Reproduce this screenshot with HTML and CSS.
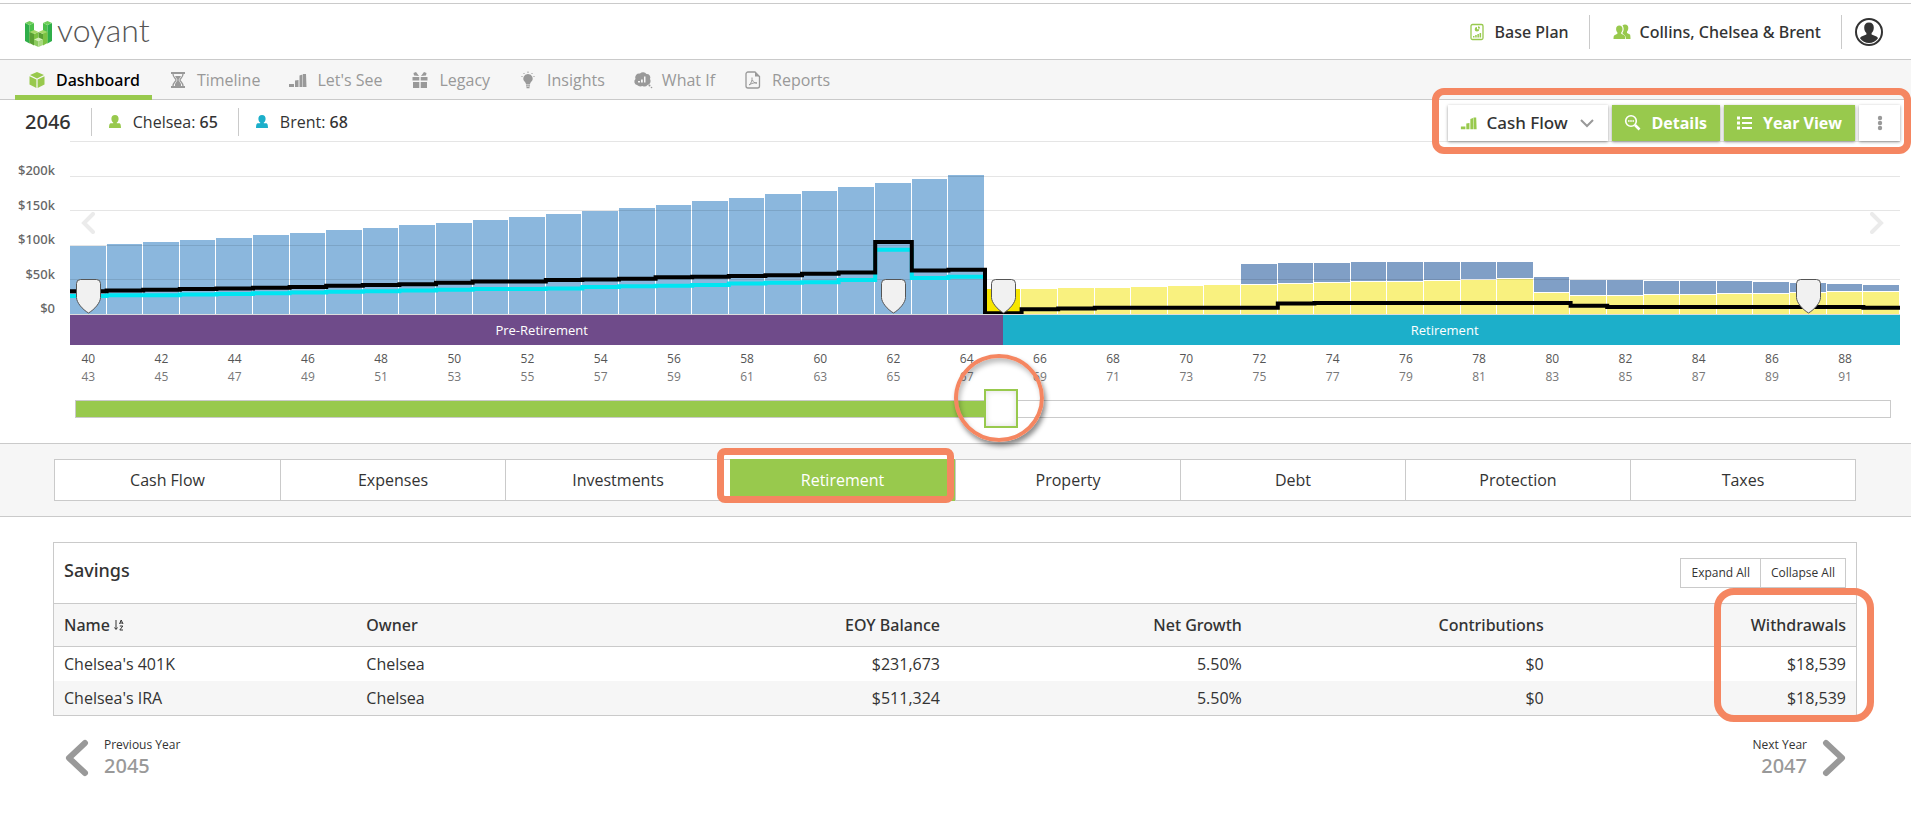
FILE: index.html
```
<!DOCTYPE html>
<html lang="en">

<head>
  <meta charset="UTF-8">
  <meta name="viewport" content="width=device-width, initial-scale=1.0">
  <link rel="icon" href="data:,">
  <title>Voyant - Dashboard</title>
  <link rel="stylesheet" href="styles.css">
</head>

<body>
  <header class="topbar">
    <a href="#" class="logo">
      <svg viewBox="0 0 27 26" width="27" height="26" aria-hidden="true">
        <path fill="#2fae49" d="M0 2l4.500 2v18.500L0 20z" />
        <path fill="#4cc04a" d="M4.500 4 9 2v18l-4.500 2.500z" />
        <path fill="#6fcf5a" d="M0 2 4.500 0 9 2 4.500 4z" />
        <path fill="#4cc04a" d="M18 2l4.500 2v18.500L18 20z" />
        <path fill="#2fae49" d="M22.500 4 27 2v18l-4.500 2.500z" />
        <path fill="#6fcf5a" d="M18 2 22.500 0 27 2l-4.500 2z" />
        <path fill="#5b9f34" d="M4.500 11 9 13v11.500l-4.500-2.500z" />
        <path fill="#7cc242" d="M9 13l4.500-2v9L9 24z" />
        <path fill="#a5d867" d="M4.500 11 9 9l4.500 2L9 13z" />
        <path fill="#5b9f34" d="M13.500 11l4.500 2v11l-4.500-3z" />
        <path fill="#7cc242" d="M18 13l4.500-2v11L18 24.500z" />
        <path fill="#a5d867" d="M13.500 11 18 9l4.500 2-4.500 2z" />
        <path fill="#8ccb5e" d="M9 18.500l4.500 2V26L9 24z" />
        <path fill="#a9da80" d="M13.500 20.500l4.500-2V24l-4.500 2z" />
        <path fill="#d3efb8" d="M9 18.500l4.500-2 4.500 2-4.500 2z" />
      </svg>
      <span>voyant</span>
    </a>
    <div class="account">
      <a href="#">
        <svg class="green" viewBox="0 0 20 20" width="20" height="20"><use href="#i-plan" /></svg>
        Base Plan
      </a>
      <a href="#">
        <svg class="green" viewBox="0 0 20 20" width="20" height="20"><use href="#i-people" /></svg>
        Collins, Chelsea &amp; Brent
      </a>
      <button class="user" aria-label="User menu">
        <svg viewBox="0 0 28 28" width="28" height="28"><use href="#i-user" /></svg>
      </button>
    </div>
  </header>

  <nav class="menu">
    <a href="#" class="active"><svg viewBox="0 0 20 20" width="20" height="20"><use href="#i-cube" /></svg>Dashboard</a>
    <a href="#"><svg viewBox="0 0 20 20" width="20" height="20"><use href="#i-hourglass" /></svg>Timeline</a>
    <a href="#"><svg viewBox="0 0 20 20" width="20" height="20"><use href="#i-bars" /></svg>Let's See</a>
    <a href="#"><svg viewBox="0 0 20 20" width="20" height="20"><use href="#i-gift" /></svg>Legacy</a>
    <a href="#"><svg viewBox="0 0 20 20" width="20" height="20"><use href="#i-bulb" /></svg>Insights</a>
    <a href="#"><svg viewBox="0 0 20 20" width="20" height="20"><use href="#i-cloud" /></svg>What If</a>
    <a href="#"><svg viewBox="0 0 20 20" width="20" height="20"><use href="#i-report" /></svg>Reports</a>
  </nav>

  <main>
    <div class="yearbar">
      <h1>2046</h1>
      <div class="person"><svg class="green" viewBox="0 0 20 20" width="20" height="20"><use href="#i-person" /></svg><span>Chelsea: <b>65</b></span></div>
      <div class="person"><svg class="teal" viewBox="0 0 20 20" width="20" height="20"><use href="#i-person" /></svg><span>Brent: <b>68</b></span></div>
      <div class="toolbar">
        <div class="picker">
          <svg class="green" viewBox="0 0 20 20" width="18" height="18"><use href="#i-bars" /></svg>
          <select aria-label="Chart">
            <option>Cash Flow</option>
          </select>
          <svg class="arrow" viewBox="0 0 14 9" width="14" height="9"><path d="M1 1l6 6 6-6" /></svg>
        </div>
        <button class="primary"><svg viewBox="0 0 20 20" width="20" height="20"><use href="#i-zoom" /></svg>Details</button>
        <button class="primary"><svg viewBox="0 0 20 20" width="20" height="20"><use href="#i-list" /></svg>Year View</button>
        <button class="more" aria-label="More"><svg viewBox="0 0 6 16" width="6" height="16"><use href="#i-dots" /></svg></button>
        <span class="mark mark-toolbar"></span>
      </div>
    </div>

    <section class="chart">
      <div class="scale">
        <span>$200k</span>
        <span>$150k</span>
        <span>$100k</span>
        <span>$50k</span>
        <span>$0</span>
      </div>
      <div class="plot">
        <div class="canvas">
          <div class="bars" id="bars"></div>
          <div class="grid"><i></i><i></i><i></i><i></i><i></i></div>
          <svg class="lines" viewBox="0 0 50 250" preserveAspectRatio="none">
            <path id="expenses" class="line-expenses" />
            <path id="needs" class="line-needs" />
          </svg>
          <div class="events" id="events"></div>
          <button class="scroll scroll-left" aria-label="Earlier"><svg viewBox="0 0 14 22" width="14" height="22"><path d="M12 2 3 11l9 9" /></svg></button>
          <button class="scroll scroll-right" aria-label="Later"><svg viewBox="0 0 14 22" width="14" height="22"><path d="M2 2l9 9-9 9" /></svg></button>
        </div>
        <div class="stages">
          <div class="pre">Pre-Retirement</div>
          <div class="post">Retirement</div>
        </div>
        <div class="ages" id="ages"></div>
        <div class="slider">
          <input type="range" id="year" min="0" max="49" value="25" aria-label="Year">
          <span class="mark mark-slider"></span>
        </div>
      </div>
    </section>

    <div class="tabs-wrap">
      <div class="tabs">
        <button>Cash Flow</button>
        <button>Expenses</button>
        <button>Investments</button>
        <button class="selected">Retirement<span class="mark mark-tab"></span></button>
        <button>Property</button>
        <button>Debt</button>
        <button>Protection</button>
        <button>Taxes</button>
      </div>
    </div>

    <section class="card">
      <div class="card-head">
        <h2>Savings</h2>
        <div class="toggle">
          <button>Expand All</button>
          <button>Collapse All</button>
        </div>
      </div>
      <table>
        <thead>
          <tr>
            <th>Name <svg viewBox="0 0 10 12" width="10" height="12"><use href="#i-sort" /></svg></th>
            <th>Owner</th>
            <th class="num">EOY Balance</th>
            <th class="num">Net Growth</th>
            <th class="num">Contributions</th>
            <th class="num">Withdrawals</th>
          </tr>
        </thead>
        <tbody>
          <tr>
            <td>Chelsea's 401K</td>
            <td>Chelsea</td>
            <td class="num">$231,673</td>
            <td class="num">5.50%</td>
            <td class="num">$0</td>
            <td class="num">$18,539</td>
          </tr>
          <tr>
            <td>Chelsea's IRA</td>
            <td>Chelsea</td>
            <td class="num">$511,324</td>
            <td class="num">5.50%</td>
            <td class="num">$0</td>
            <td class="num">$18,539</td>
          </tr>
        </tbody>
      </table>
      <span class="mark mark-column"></span>
    </section>

    <div class="pager">
      <a href="#">
        <svg viewBox="0 0 24 38" width="24" height="38"><path d="M20 4 4 19l16 15" /></svg>
        <span><small>Previous Year</small><strong>2045</strong></span>
      </a>
      <a href="#" class="next">
        <span><small>Next Year</small><strong>2047</strong></span>
        <svg viewBox="0 0 24 38" width="24" height="38"><path d="M4 4l16 15L4 34" /></svg>
      </a>
    </div>
  </main>

  <svg style="display: none;">
    <defs>
      <symbol id="i-cube" viewBox="0 0 20 20">
        <path d="M10 2l7 3-7 3.400L3 5z" />
        <path d="M2.500 6.200 9.400 9.500V18l-6.900-3.400z" />
        <path d="M17.500 6.200 10.600 9.500V18l6.900-3.400z" />
      </symbol>
      <symbol id="i-hourglass" viewBox="0 0 20 20">
        <path d="M3 2h14v2H3zM3 16h14v2H3z" />
        <path d="M5 4c0 3.500 3 4.500 3 6s-3 2.500-3 6M15 4c0 3.500-3 4.500-3 6s3 2.500 3 6" fill="none" stroke="currentColor" stroke-width="1.300" />
        <path d="M7 6h6l-2.500 4 2.500 4v2H7v-2l2.500-4z" />
      </symbol>
      <symbol id="i-bars" viewBox="0 0 20 20">
        <path d="M1 14h5v3H1zM7 10.500l3.500-.5v7H7zM11.500 5.500l3-1V17h-3zM15 4h3l.5 13H15z" />
      </symbol>
      <symbol id="i-gift" viewBox="0 0 20 20">
        <path d="M2.500 7h6.800v3.500H2.500zM10.700 7h6.800v3.500h-6.800zM3 12h6.300v6H3zM10.700 12H17v6h-6.300z" />
        <path d="M9 6 4 5.500 3.500 3 6 2zM11 6l5-.5.500-2.500L14 2z" />
      </symbol>
      <symbol id="i-bulb" viewBox="0 0 20 20">
        <path d="M10 4a4.500 4.500 0 0 1 3.200 7.800c-.8.800-1.200 1.700-1.200 2.700H8c0-1-.4-1.900-1.200-2.700A4.500 4.500 0 0 1 10 4zM8 15.200h4v1.200H8zM8.500 17h3v1.300h-3z" />
        <path d="M10 1.500v1.500M5.500 3l1 1M14.500 3l-1 1M3.500 6.500h1M15.500 6.500h1" fill="none" stroke="currentColor" />
      </symbol>
      <symbol id="i-cloud" viewBox="0 0 20 20">
        <path d="M4 15a3.500 3.500 0 0 1-1.500-6A4 4 0 0 1 7 3.500a4.500 4.500 0 0 1 6.500.5A3.500 3.500 0 0 1 17 9a4 4 0 0 1-2.500 6 4 4 0 0 1-5 1 5 5 0 0 1-5.500-1z" />
        <path fill="#f6f6f6" d="M5 11h2v1.500H5zM8 9.500h1.800v3H8zM11 6.500h1.500v6H11z" />
        <circle cx="16.500" cy="15.500" r="1" />
        <circle cx="18.500" cy="17.500" r=".8" />
      </symbol>
      <symbol id="i-report" viewBox="0 0 20 20">
        <path d="M5 2h7l4.500 4.500V16a2 2 0 0 1-2 2H5a2 2 0 0 1-2-2V4a2 2 0 0 1 2-2z" fill="none" stroke="currentColor" stroke-width="1.300" />
        <path d="M12 2v4.500h4.500z" />
        <path d="M6 15c2-1.500 3.500-4.500 3-7.500M9.500 10c.5 2 2 3 4.500 3-3-.5-5 .2-8 2" fill="none" stroke="currentColor" />
      </symbol>
      <symbol id="i-plan" viewBox="0 0 20 20">
        <rect x="4" y="2.500" width="12" height="15" rx="1.500" fill="none" stroke="currentColor" stroke-width="1.300" />
        <path d="M10 5a2.300 2.300 0 1 0 2.300 2.300H10z" />
        <path d="M11 4.200v2.200h2.200A2.200 2.200 0 0 0 11 4.200zM6 14h1.500v1.500H6zM8.200 13h1.500v2.500H8.200zM10.400 12h1.500v3.500h-1.500zM12.600 11h1.500v4.500h-1.500z" />
      </symbol>
      <symbol id="i-people" viewBox="0 0 20 20">
        <path d="M13 2.500c2.200 0 3.300 1.500 3.300 3.500 0 1.500-.5 2.800-1.300 3.600v1.400l3 1.500c.4 1 .5 2.500.5 4.500H14c-.2-2.500-.8-3.800-2.500-4.600L10.300 11c1-1.200 1.500-2.700 1.300-4.700-.1-1.300-.5-2.300-1.100-2.900.7-.6 1.500-.9 2.500-.9z" />
        <path d="M7.300 3.500c2.100 0 3.200 1.400 3.200 3.400 0 1.500-.5 2.700-1.300 3.500v1.300l3 1.500c.8.500 1 1.800 1 3.800H1.500c0-2 .2-3.300 1-3.800l2.900-1.500v-1.300c-.8-.8-1.300-2-1.300-3.500 0-2 1.100-3.400 3.200-3.400z" />
      </symbol>
      <symbol id="i-person" viewBox="0 0 20 20">
        <path d="M10 3c2.400 0 3.600 1.600 3.600 3.700 0 1.700-.7 3-1.800 3.900v.7h2.700c1 .3 1.400 1.700 1.500 4.700H4c.1-3 .5-4.400 1.500-4.700h2.700v-.7c-1.100-.9-1.800-2.200-1.800-3.900C6.400 4.600 7.600 3 10 3z" />
      </symbol>
      <symbol id="i-user" viewBox="0 0 28 28">
        <circle cx="14" cy="14" r="13" fill="none" stroke="currentColor" stroke-width="2" />
        <path d="M14 4.500c3.300 0 4.800 2 4.800 5 0 2.500-.8 4.300-2.200 5.500v1.500l4.900 2c.8.400 1.200 1 1.500 1.700a11 11 0 0 1-18 0c.3-.7.700-1.300 1.500-1.700l4.900-2V15c-1.400-1.200-2.200-3-2.200-5.500 0-3 1.500-5 4.800-5z" />
      </symbol>
      <symbol id="i-zoom" viewBox="0 0 20 20">
        <circle cx="8" cy="8" r="5.300" fill="none" stroke="currentColor" stroke-width="1.600" />
        <path d="M12 12l4.500 4.500" stroke="currentColor" stroke-width="2.600" />
        <path d="M5 7.200h1.600v1.600H5zM7.200 7.200h1.600v1.600H7.200zM9.400 7.200H11v1.600H9.400z" />
      </symbol>
      <symbol id="i-list" viewBox="0 0 20 20">
        <path d="M2 3.500h3v3H2zM7 4h10v2H7zM2 8.500h3v3H2zM7 9h10v2H7zM2 13.500h3v3H2zM7 14h10v2H7z" />
      </symbol>
      <symbol id="i-dots" viewBox="0 0 6 16">
        <circle cx="3" cy="3" r="2.200" /><circle cx="3" cy="8" r="2.200" /><circle cx="3" cy="13" r="2.200" />
      </symbol>
      <symbol id="i-sort" viewBox="0 0 10 12">
        <path d="M2 1v9M.5 8.500 2 10.500l1.500-2M5.500 5 7.200 1 9 5M6 4h2.500M5.800 7h3L5.800 11h3.200" fill="none" stroke="currentColor" />
      </symbol>
    </defs>
  </svg>

  <script src="chart.js"></script>
</body>

</html>
```

FILE: styles.css
```
:root {
  --green: #98c94d;
  --border: #cacaca;
  --panel: #f6f6f6;
  --mark: #f58661;
}

* {
  box-sizing: border-box;
}

body {
  margin: 0;
  font: 16px/24px "Open Sans", "Noto Sans", sans-serif;
  background: #fff;
  color: #333;
}

button,
select {
  margin: 0;
  padding: 0;
  border: 0;
  background: none;
  font: inherit;
  color: inherit;
  cursor: pointer;
}

a {
  text-decoration: none;
  color: inherit;
}

svg {
  display: block;
  fill: currentColor;
}

h1,
h2 {
  margin: 0;
}

/* Open Sans has no medium weight installed */
h1,
h2,
th,
.account,
.menu .active,
.person b,
.picker select,
.scale,
.pager strong {
  font-family: "Noto Sans", "Open Sans", sans-serif;
  font-weight: 500;
}

.green {
  color: var(--green);
}

.teal {
  color: #1cafca;
}

/* Header */

.topbar {
  display: flex;
  align-items: center;
  justify-content: space-between;
  block-size: 57px;
  margin-block-start: 3px;
  padding-inline: 25px 28px;
  border-block: 1px solid var(--border);
}

.logo {
  display: flex;
  align-items: center;
  gap: 5px;
  padding-block-start: 5px;
  font: 300 32px/40px Lato, sans-serif;
  color: #555;
}

.logo span {
  margin-block-end: 9px;
}

.account {
  display: flex;
  align-items: center;
}

.account a {
  display: flex;
  align-items: center;
  gap: 8px;
  block-size: 34px;
  padding-inline: 22px 20px;
  border-inline-end: 1px solid var(--border);
}

.user {
  margin-inline-start: 13px;
}

.menu {
  display: flex;
  gap: 4px;
  block-size: 40px;
  padding-inline: 15px;
  background: var(--panel);
  border-block-end: 1px solid var(--border);
  color: #999;
}

.menu a {
  display: flex;
  align-items: center;
  gap: 9px;
  block-size: 40px;
  padding-inline: 12px;
}

.menu .active {
  border-block: 5px solid transparent;
  border-block-end-color: var(--green);
  color: #000;
}

.menu .active svg {
  color: var(--green);
}

/* Year summary and chart toolbar */

.yearbar {
  display: flex;
  align-items: center;
  block-size: 41px;
  padding: 3px 11px 0 25px;
}

.yearbar h1 {
  font-size: 20px;
}

.person {
  display: flex;
  align-items: center;
  gap: 8px;
  block-size: 28px;
  margin-inline-start: 20px;
  padding-inline-start: 13px;
  border-inline-start: 1px solid var(--border);
}

.toolbar {
  position: relative;
  z-index: 2;
  display: flex;
  gap: 4px;
  margin-inline-start: auto;
  padding-block-start: 2px;
}

.toolbar > div,
.toolbar > button {
  display: flex;
  align-items: center;
  block-size: 36px;
  background: #fff;
  box-shadow: 0 1px 3px rgb(0 0 0 / 0.4);
}

.picker {
  gap: 8px;
  padding-inline: 12px 14px;
}

.picker select {
  appearance: none;
  font-size: 17px;
}

.arrow {
  margin-inline-start: 4px;
  fill: none;
  stroke: #999;
  stroke-width: 2;
}

.toolbar .primary {
  gap: 8px;
  padding-inline: 11px 13px;
  background: var(--green);
  font-weight: 700;
  color: #fff;
}

.toolbar .more {
  justify-content: center;
  inline-size: 41px;
  color: #999;
}

/* Callouts */

.mark {
  position: absolute;
  border: 7px solid var(--mark);
  border-radius: 12px;
  pointer-events: none;
}

.mark-toolbar {
  inset: -15px -11px -13px -16px;
}

.mark-slider {
  inset-block-start: -35px;
  inset-inline-start: calc(17px + (100% - 34px) * 25 / 49);
  inline-size: 90px;
  block-size: 88px;
  margin-inline-start: -47px;
  border-width: 4px;
  border-radius: 50%;
  box-shadow: 2px 4px 5px rgb(0 0 0 / 0.45), inset 2px 4px 5px rgb(0 0 0 / 0.25);
}

.mark-tab {
  inset: -11px 1px -2px -13px;
  border-radius: 8px;
  background: linear-gradient(#fff 4px, transparent 4px);
}

.mark-column {
  inset-block: 45px -7px;
  inset-inline-end: -18px;
  inline-size: 160px;
  border-radius: 20px;
}

/* Chart */

.chart {
  display: flex;
  padding-inline-end: 11px;
}

.scale {
  display: flex;
  flex-direction: column;
  justify-content: space-between;
  inline-size: 70px;
  block-size: 179px;
  padding: 17px 15px 0 0;
  text-align: end;
  font-size: 13px;
  color: #666;
}

.plot {
  flex: 1;
  min-inline-size: 0;
}

.canvas {
  position: relative;
  block-size: 174px;
  border-block-end: 1px solid #ddd;
}

.bars,
.events {
  display: flex;
  align-items: end;
  block-size: 100%;
}

.col {
  flex: 1;
  display: flex;
  flex-direction: column;
  justify-content: end;
  gap: 1px;
  block-size: 100%;
  border-inline-end: 1px solid #fff;
}

.income {
  background: #8bb7dd;
}

.social {
  background: #f9f17f;
}

.savings {
  background: #809fc6;
}

.current .social {
  background: #f7e600;
}

.grid {
  position: absolute;
  inset: 0;
  display: flex;
  flex-direction: column;
}

.grid i {
  flex: 1;
  border-block-start: 1px solid rgb(0 0 0 / 0.1);
}

.lines {
  position: absolute;
  inset: 0;
  inline-size: 100%;
  block-size: 100%;
  fill: none;
}

.lines path {
  stroke-width: 4px;
  vector-effect: non-scaling-stroke;
}

.line-expenses {
  stroke: #00e5f2;
}

.line-needs {
  stroke: #000;
}

.events {
  position: absolute;
  inset: 0;
}

.events span {
  flex: 1;
}

.events svg {
  margin-inline: auto;
  fill: #f1f1f1;
  stroke: #555;
}

.scroll {
  position: absolute;
  inset-block-start: 71px;
}

.scroll svg {
  fill: none;
  stroke: #ebebeb;
  stroke-width: 4;
  stroke-linecap: round;
}

.scroll-left {
  inset-inline-start: 11px;
}

.scroll-right {
  inset-inline-end: 16px;
}

.stages {
  display: grid;
  grid-template-columns: 51fr 49fr;
  line-height: 30px;
  text-align: center;
  font-size: 13px;
  color: #fff;
}

.pre {
  padding-inline-start: 10px;
  background: #6f4b8a;
}

.post {
  padding-inline-end: 14px;
  background: #1cafca;
}

.ages {
  display: grid;
  grid-template-columns: repeat(25, 1fr);
  padding-block: 5px 3px;
  font-size: 12px;
  line-height: 18px;
  color: #555;
}

.ages div {
  inline-size: 50%;
  text-align: center;
}

.ages span {
  display: block;
}

.ages span + span {
  color: #777;
}

.slider {
  position: relative;
  block-size: 54px;
  margin-inline: 5px 9px;
}

.slider input {
  appearance: none;
  display: block;
  inline-size: 100%;
  block-size: 39px;
  margin: 0;
  background: none;
}

.slider input::-webkit-slider-runnable-track {
  block-size: 18px;
  border: 1px solid var(--border);
  background: linear-gradient(var(--green), var(--green)) no-repeat 0 0 / var(--fill) 100%;
}

.slider input::-webkit-slider-thumb {
  appearance: none;
  inline-size: 34px;
  block-size: 39px;
  margin-block-start: -12px;
  border: 2px solid var(--green);
  background: #fff;
  box-shadow: inset 0 0 6px #ddd;
}

/* Tabs */

.tabs-wrap {
  padding: 15px 55px 15px 54px;
  border-block: 1px solid var(--border);
  background: var(--panel);
}

.tabs {
  display: grid;
  grid-template-columns: repeat(8, 1fr);
  border: 1px solid var(--border);
  background: #fff;
}

.tabs button {
  block-size: 40px;
}

.tabs button + button {
  border-inline-start: 1px solid var(--border);
}

.tabs .selected {
  position: relative;
  block-size: 42px;
  margin-block: -1px;
  border: 0;
  background: var(--green);
  color: #fff;
}

/* Savings table */

.card {
  position: relative;
  margin: 25px 54px 0 53px;
  border: 1px solid var(--border);
}

.card-head {
  display: flex;
  justify-content: space-between;
  block-size: 60px;
  padding: 15px 10px 0;
}

.card-head h2 {
  font-size: 18px;
}

.toggle {
  display: flex;
  block-size: 30px;
  border: 1px solid var(--border);
  font-size: 12px;
}

.toggle button {
  padding-inline: 10px;
}

.toggle button + button {
  border-inline-start: 1px solid var(--border);
}

table {
  inline-size: 100%;
  table-layout: fixed;
  border-collapse: collapse;
}

th,
td {
  padding: 5px 15px;
  text-align: start;
}

th {
  block-size: 43px;
  border-block: 1px solid var(--border);
  background: var(--panel);
}

th svg {
  display: inline-block;
}

th:first-child,
th:last-child {
  inline-size: 16.5%;
}

th:first-child,
td:first-child {
  padding-inline-start: 10px;
}

th:last-child,
td:last-child {
  padding-inline-end: 10px;
}

tbody tr:nth-child(even) {
  background: var(--panel);
}

.num {
  text-align: end;
}

/* Previous and next year */

.pager {
  display: flex;
  justify-content: space-between;
  margin: 19px 65px 0;
}

.pager a {
  display: flex;
  align-items: center;
  gap: 15px;
}

.pager svg {
  margin-block-start: 4px;
  fill: none;
  stroke: #999;
  stroke-width: 6;
  stroke-linecap: round;
  stroke-linejoin: round;
}

.pager small,
.pager strong {
  display: block;
}

.pager small {
  font-size: 12px;
  line-height: 20px;
}

.pager strong {
  font-size: 20px;
  line-height: 22px;
  color: #999;
}

.next {
  text-align: end;
}
```

FILE: chart.js
```
// All amounts are in thousands of dollars, one per year
const MAX = 250;
const START = [40, 43];
const current = 25;

const income = [98, 101, 104, 107, 110, 114, 117, 121, 124, 129, 131, 136, 140, 144, 149, 153, 157, 163, 168, 173, 178, 183, 189, 195, 201];
const social = [36, 36, 37, 37, 39, 40, 42, 42, 43, 45, 46, 46, 48, 49, 51, 30, 26, 26, 27, 27, 29, 29, 30, 32, 32];
const total = [71, 72, 72, 74, 74, 74, 74, 74, 52, 48, 48, 46, 46, 46, 45, 43, 42, 40];
const expenses = [26, 27, 27, 28, 29, 30, 31, 32, 33, 34, 35, 36, 36, 37, 39, 40, 41, 42, 44, 45, 46, 49, 93, 52, 54];
const needs = [33, 34, 35, 36, 37, 38, 39, 41, 42, 43, 45, 47, 47, 49, 50, 51, 53, 54, 55, 56, 58, 60, 104, 63, 64,
  1, 7, 8, 9, 9, 9, 9, 9, 15, 16, 16, 16, 16, 16, 16, 16, 12, 10, 10, 10, 10, 10, 10, 10, 9];
const events = [0, 22, 25, 47];

const bars = document.querySelector('#bars');
const eventRow = document.querySelector('#events');
const ages = document.querySelector('#ages');
const year = document.querySelector('#year');

function addBar(col, type, value) {
  const bar = document.createElement('div');
  bar.className = type;
  bar.style.height = `${value / MAX * 100}%`;
  col.append(bar);
}

// Each value is a flat step, one unit wide
function stepPath(values) {
  return values.map((v, i) => `${i ? 'L' : 'M'}${i} ${MAX - v}H${i + 1}`).join('');
}

for (let i = 0; i < 50; i++) {
  const col = document.createElement('div');
  col.className = i === current ? 'col current' : 'col';
  if (i < 25) {
    addBar(col, 'income', income[i]);
  }
  else {
    if (i >= 32) {
      addBar(col, 'savings', total[i - 32] - social[i - 25]);
    }
    addBar(col, 'social', social[i - 25]);
  }
  bars.append(col);

  const slot = document.createElement('span');
  if (events.includes(i)) {
    slot.innerHTML = '<svg viewBox="0 0 25 35" width="25" height="35"><path d="M4.500.5h16q4 0 4 4v14c0 5-6 12-12 15.500C6.500 30.500.5 23.500.5 18.500v-14q0-4 4-4z" /></svg>';
  }
  eventRow.append(slot);

  if (i % 2 === 0) {
    ages.insertAdjacentHTML('beforeend', `<div><span>${START[0] + i}</span><span>${START[1] + i}</span></div>`);
  }
}

document.querySelector('#expenses').setAttribute('d', stepPath(expenses));
document.querySelector('#needs').setAttribute('d', stepPath(needs));

function updateFill() {
  year.style.setProperty('--fill', `${year.value / year.max * 100}%`);
}

year.addEventListener('input', updateFill);
updateFill();
```
